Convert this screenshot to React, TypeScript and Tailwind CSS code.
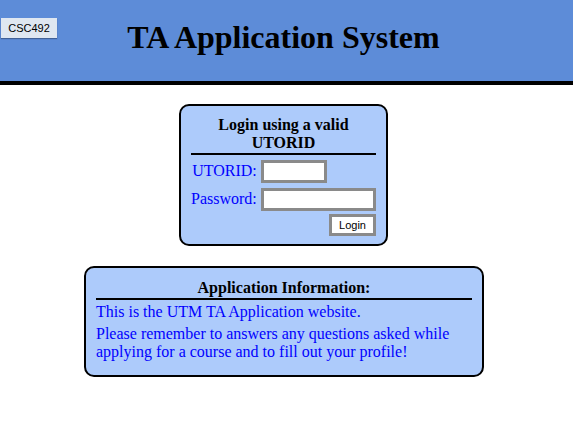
export default function App() {
  const serif = { fontFamily: '"Liberation Serif", "Times New Roman", serif' };
  const sans = { fontFamily: '"Liberation Sans", Arial, sans-serif' };

  return (
    <div className="w-[573px] h-[428px] bg-white" style={serif}>
      <header className="relative h-[85px] bg-[#5d8cd8] border-b-4 border-black">
        <button
          className="absolute left-[1px] top-[18px] h-[20px] w-[56px] bg-[#dfe7f1] text-[11px] text-black shadow-[0_1px_1px_rgba(0,0,0,0.3)]"
          style={sans}
        >
          CSC492
        </button>
        <h1 className="w-[567px] pt-[19px] text-center text-[32px] font-bold leading-[37px] text-black">
          TA Application System
        </h1>
      </header>

      <div className="w-[567px] flex flex-col items-center pt-[19px] gap-[20px]">
        <div className="w-[209px] h-[142px] rounded-[10px] border-2 border-black bg-[#adcbfb] px-[10px] pt-[10px]">
          <div className="text-center text-[16px] font-bold leading-[18px] text-black border-b-2 border-black pb-[1px]">
            Login using a valid UTORID
          </div>
          <div className="grid grid-cols-[auto_1fr] gap-x-[4px] gap-y-[4px] mt-[4px] items-center text-[16px] text-[#0000ff]">
            <span className="text-right pl-[1px]">UTORID:</span>
            <input className="w-[66px] h-[23px] border-[3px] border-[#8a8a8a] bg-white outline-none" />
            <span className="text-right">Password:</span>
            <input
              type="password"
              className="w-[115px] h-[23px] border-[3px] border-[#8a8a8a] bg-white outline-none"
            />
          </div>
          <div className="flex justify-end mt-[3px]">
            <button
              className="w-[47px] h-[22px] border-[3px] border-[#8a8a8a] bg-white text-[11px] text-black leading-none"
              style={sans}
            >
              Login
            </button>
          </div>
        </div>

        <div className="ml-[1px] w-[400px] h-[111px] rounded-[10px] border-2 border-black bg-[#adcbfb] px-[10px] pt-[11px]">
          <div className="text-center text-[16px] font-bold leading-[18px] text-black border-b-2 border-black pb-[1px]">
            Application Information:
          </div>
          <p className="text-[16px] leading-[18px] text-[#0000ff] mt-[3px]">
            This is the UTM TA Application website.
          </p>
          <p className="text-[16px] leading-[18px] text-[#0000ff] mt-[4px]">
            Please remember to answers any questions asked while applying for a course and to fill out your profile!
          </p>
        </div>
      </div>
    </div>
  );
}
